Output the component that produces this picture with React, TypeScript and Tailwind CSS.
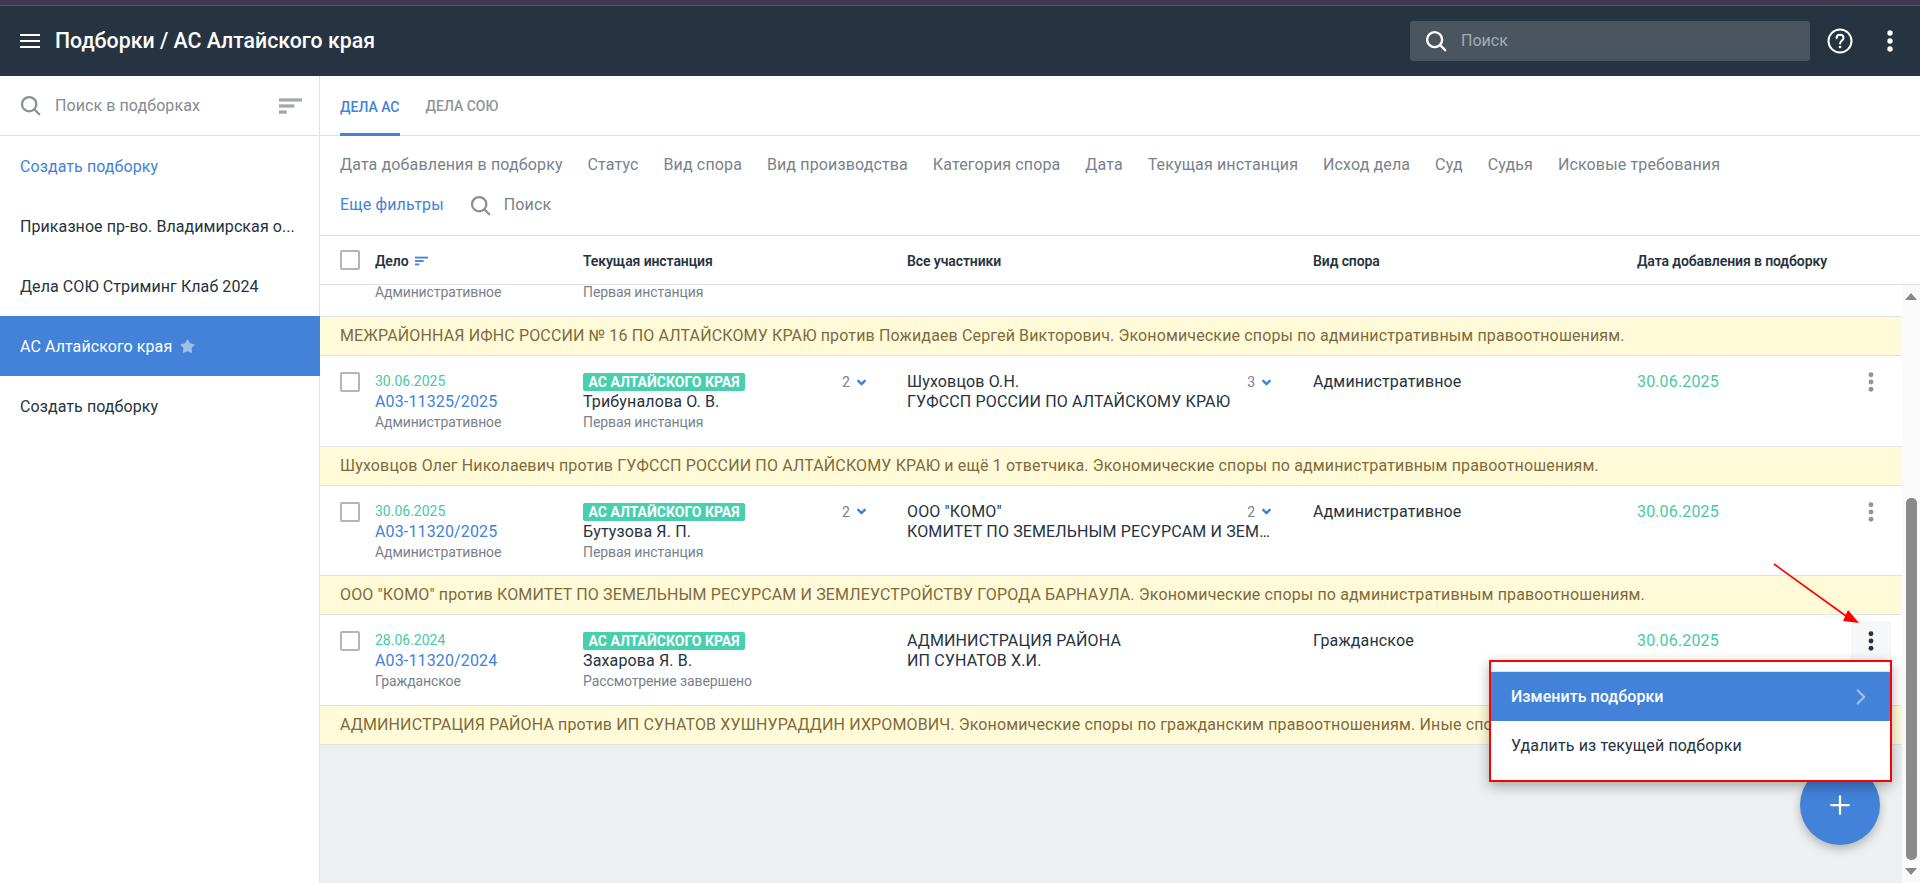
import React from 'react';
import { ChevronDown, ChevronRight, Plus, Star } from 'lucide-react';

const SearchIcon = ({ className }: { className: string }) => (
  <svg viewBox="0 0 24 24" fill="none" stroke="currentColor" strokeWidth="2.6" strokeLinecap="round" className={className}>
    <circle cx="10.5" cy="10.5" r="8.2" />
    <path d="M16.6 16.6 L22 22" />
  </svg>
);

const SortIcon = ({ className }: { className: string }) => (
  <svg viewBox="0 0 24 16" fill="currentColor" className={className}>
    <rect x="0" y="0" width="24" height="3.4" />
    <rect x="0" y="6.3" width="16" height="3.4" />
    <rect x="0" y="12.6" width="8" height="3.4" />
  </svg>
);

const Dots = ({ className }: { className: string }) => (
  <svg viewBox="0 0 6 22" fill="currentColor" className={className}>
    <circle cx="3" cy="3" r="2.7" />
    <circle cx="3" cy="11" r="2.7" />
    <circle cx="3" cy="19" r="2.7" />
  </svg>
);

const Check = () => (
  <div className="w-5 h-5 shrink-0 rounded-[2px] border-[2px] border-[#b3b6b9] bg-white" />
);

const FILTERS = [
  'Дата добавления в подборку', 'Статус', 'Вид спора', 'Вид производства', 'Категория спора', 'Дата',
  'Текущая инстанция', 'Исход дела', 'Суд', 'Судья', 'Исковые требования',
];

const ROWS = [
  {
    date: '30.06.2025', num: 'А03-11325/2025', kind: 'Административное', judge: 'Трибуналова О. В.', stage: 'Первая инстанция', judges: '2',
    a: 'Шуховцов О.Н.', b: 'ГУФССП РОССИИ ПО АЛТАЙСКОМУ КРАЮ', count: '3', added: '30.06.2025',
    note: 'Шуховцов Олег Николаевич против ГУФССП РОССИИ ПО АЛТАЙСКОМУ КРАЮ и ещё 1 ответчика. Экономические споры по административным правоотношениям.',
  },
  {
    date: '30.06.2025', num: 'А03-11320/2025', kind: 'Административное', judge: 'Бутузова Я. П.', stage: 'Первая инстанция', judges: '2',
    a: 'ООО "КОМО"', b: 'КОМИТЕТ ПО ЗЕМЕЛЬНЫМ РЕСУРСАМ И ЗЕМЛЕУСТРОЙСТВУ', count: '2', added: '30.06.2025',
    note: 'ООО "КОМО" против КОМИТЕТ ПО ЗЕМЕЛЬНЫМ РЕСУРСАМ И ЗЕМЛЕУСТРОЙСТВУ ГОРОДА БАРНАУЛА. Экономические споры по административным правоотношениям.',
  },
  {
    date: '28.06.2024', num: 'А03-11320/2024', kind: 'Гражданское', judge: 'Захарова Я. В.', stage: 'Рассмотрение завершено', judges: '',
    a: 'АДМИНИСТРАЦИЯ РАЙОНА', b: 'ИП СУНАТОВ Х.И.', count: '', added: '30.06.2025', active: true,
    note: 'АДМИНИСТРАЦИЯ РАЙОНА против ИП СУНАТОВ ХУШНУРАДДИН ИХРОМОВИЧ. Экономические споры по гражданским правоотношениям. Иные споры по гражданским правоотношениям.',
  },
];

const Note = ({ text }: { text: string }) => (
  <div className="h-10 flex items-center pl-5 pr-4 bg-[#fffbd9] border-y border-[#e0e2e3] text-[16px] tracking-[0.14px] text-[#806a3c] whitespace-nowrap overflow-hidden">
    {text}
  </div>
);

const Count = ({ n }: { n: string }) => (
  <div className="self-start flex items-center gap-[5px] shrink-0 text-[14px] tracking-normal text-[#78828c] leading-5">
    {n}
    <ChevronDown size={13} strokeWidth={4.5} className="text-[#4282d9]" />
  </div>
);

export default function App() {
  return (
    <div className="relative h-[883px] w-[1920px] overflow-hidden bg-white text-[#263340] font-['Roboto',sans-serif] flex flex-col">
      <div className="h-[6px] shrink-0 bg-[#423750] border-b border-[#5a5560]" />

      {/* шапка */}
      <header className="h-[70px] shrink-0 bg-[#263340] flex items-center text-white">
        <div className="ml-5 w-5 flex flex-col gap-[3.5px]">
          <span className="h-[2.5px] bg-white" />
          <span className="h-[2.5px] bg-white" />
          <span className="h-[2.5px] bg-white" />
        </div>
        <div className="ml-[15px] text-[21.3px] font-medium">Подборки / АС Алтайского края</div>
        <div className="ml-auto w-[400px] h-10 rounded-[3px] bg-[#4a5560] flex items-center pl-[15px]">
          <SearchIcon className="w-[22px] h-[22px] text-white" />
          <span className="ml-[14px] text-[16px] text-[#a5abb1]">Поиск</span>
        </div>
        <svg viewBox="0 0 26 26" className="ml-[17px] w-[26px] h-[26px]" fill="none" stroke="white" strokeWidth="2">
          <circle cx="13" cy="13" r="11.5" />
          <path d="M9.6 10.2 C9.6 8 11.2 6.8 13 6.8 C15 6.8 16.5 8.1 16.5 9.9 C16.5 12.4 13.1 12.6 13.1 15.6" strokeLinecap="round" />
          <circle cx="13" cy="19" r="1.3" fill="white" stroke="none" />
        </svg>
        <Dots className="ml-[34px] mr-[27px] w-[6px] h-[24px] text-white" />
      </header>

      <div className="flex-1 flex min-h-0">
        {/* левая колонка */}
        <aside className="w-[320px] shrink-0 border-r border-[#e0e2e3] bg-white text-[16px] tracking-[0.08px]">
          <div className="h-[60px] border-b border-[#e0e2e3] flex items-center pl-5 pr-[17px]">
            <SearchIcon className="w-[21px] h-[21px] text-[#8a9095]" />
            <span className="ml-[14px] text-[#858b91]">Поиск в подборках</span>
            <SortIcon className="ml-auto w-[23px] h-[18px] text-[#a3a7ab]" />
          </div>
          <div className="h-[60px] pt-px flex items-center pl-5 text-[#4282d9]">Создать подборку</div>
          <div className="h-[60px] pt-px flex items-center pl-5 text-[#263340]">Приказное пр-во. Владимирская о...</div>
          <div className="h-[60px] pt-px flex items-center pl-5 text-[#263340]">Дела СОЮ Стриминг Клаб 2024</div>
          <div className="h-[60px] pt-px -mr-px flex items-center pl-5 text-white bg-[#4282d9]">
            АС Алтайского края
            <Star size={15} className="ml-[8px] text-[#a0c0ec] fill-[#a0c0ec]" />
          </div>
          <div className="h-[60px] pt-px flex items-center pl-5 text-[#263340]">Создать подборку</div>
        </aside>

        {/* основная часть */}
        <main className="flex-1 min-w-0 flex flex-col bg-[#ecf0f1]">
          <div className="bg-white">
            <div className="h-[60px] border-b border-[#e0e2e3] flex pl-5 gap-[26px] text-[14px] font-medium uppercase">
              <div className="flex items-center border-b-[3px] border-[#4282d9] -mb-px pt-[5px] text-[#4282d9]">Дела АС</div>
              <div className="flex items-center pt-[2px] text-[#8f959a]">Дела СОЮ</div>
            </div>
            <div className="h-[100px] border-b border-[#e0e2e3] pl-5 pt-[19px] text-[16px] tracking-[0.14px] text-[#78828c]">
              <div className="flex gap-[24.9px] h-5 items-center">
                {FILTERS.map(f => <span key={f}>{f}</span>)}
              </div>
              <div className="flex items-center h-5 mt-5">
                <span className="text-[#4282d9]">Еще фильтры</span>
                <SearchIcon className="ml-[26px] w-[21px] h-[21px] text-[#8a9095]" />
                <span className="ml-[13px]">Поиск</span>
              </div>
            </div>
            <div className="h-[49px] border-b border-[#e0e2e3] flex items-center pl-5 text-[14px] font-semibold tracking-[-0.1px] text-[#263340]">
              <Check />
              <div className="ml-[15px] w-[208px] flex items-center pt-[2px]">
                Дело
                <SortIcon className="ml-[6px] w-[13px] h-[10px] text-[#4282d9]" />
              </div>
              <div className="w-[324px] pt-[2px]">Текущая инстанция</div>
              <div className="w-[406px] pt-[2px]">Все участники</div>
              <div className="w-[324px] pt-[2px]">Вид спора</div>
              <div className="pt-[2px]">Дата добавления в подборку</div>
            </div>
          </div>

          <div className="flex-1 min-h-0 flex">
            <div className="flex-1 min-w-0">
              {/* строка, ушедшая под прокрутку */}
              <div className="h-[31px] bg-white flex pl-[55px] text-[14px] tracking-[-0.1px] leading-[14px] text-[#78828c]">
                <div className="w-[208px]">Административное</div>
                <div>Первая инстанция</div>
              </div>
              <Note text="МЕЖРАЙОННАЯ ИФНС РОССИИ № 16 ПО АЛТАЙСКОМУ КРАЮ против Пожидаев Сергей Викторович. Экономические споры по административным правоотношениям." />
              {ROWS.map(r => (
                <React.Fragment key={r.num}>
                  <div className="h-[89.5px] bg-white flex pl-5 pt-4 tracking-[0.14px]">
                    <Check />
                    <div className="ml-[15px] w-[208px] flex flex-col">
                      <span className="text-[14px] tracking-normal leading-[19px] text-[#48c9a5]">{r.date}</span>
                      <span className="text-[16px] leading-[21px] text-[#4282d9]">{r.num}</span>
                      <span className="text-[14px] tracking-[-0.1px] leading-[20px] text-[#78828c]">{r.kind}</span>
                    </div>
                    <div className="w-[324px] flex">
                      <div className="w-[259px] flex flex-col items-start">
                        <span className="mt-px h-[18px] px-[5.5px] rounded-[2px] bg-[#48cfad] text-white text-[14px] tracking-normal font-bold leading-[18px]">АС АЛТАЙСКОГО КРАЯ</span>
                        <span className="text-[16px] leading-[21px] text-[#263340]">{r.judge}</span>
                        <span className="text-[14px] tracking-[-0.1px] leading-[20px] text-[#78828c]">{r.stage}</span>
                      </div>
                      {r.judges && <Count n={r.judges} />}
                    </div>
                    <div className="w-[406px] text-[16px] leading-5 text-[#263340]">
                      <div className="w-[366px] flex justify-between">
                        <span className="truncate">{r.a}</span>
                        {r.count && <Count n={r.count} />}
                      </div>
                      <div className="w-[364px] truncate">{r.b}</div>
                    </div>
                    <div className="w-[324px] text-[16px] leading-5 text-[#263340]">{r.kind}</div>
                    <div className="w-[214px] text-[16px] leading-5 text-[#48c9a5]">{r.added}</div>
                    <div className={r.active ? 'w-10 h-10 -mt-[10px] rounded-[3px] bg-[#f6f7f8] flex items-center justify-center text-[#263340]' : 'w-10 h-10 -mt-[10px] flex items-center justify-center text-[#8f959a]'}>
                      <Dots className="w-[6px] h-5" />
                    </div>
                  </div>
                  <Note text={r.note} />
                </React.Fragment>
              ))}
            </div>
            {/* полоса прокрутки */}
            <div className="w-[18px] shrink-0 bg-[#fafafa] flex flex-col items-center">
              <div className="mt-[8px] w-0 h-0 border-x-[6px] border-x-transparent border-b-[7px] border-b-[#888]" />
              <div className="mt-[198px] w-[11px] h-[362px] rounded-[5px] bg-[#8a8a8a]" />
              <div className="mt-[8px] w-0 h-0 border-x-[6px] border-x-transparent border-t-[7px] border-t-[#888]" />
            </div>
          </div>
        </main>
      </div>

      {/* FAB */}
      <div className="absolute left-[1800px] top-[765px] w-20 h-20 rounded-full bg-[#4282d9] shadow-[0_4px_10px_rgba(0,0,0,0.25)] flex items-center justify-center">
        <Plus size={30} strokeWidth={1.8} className="text-white" />
      </div>

      {/* меню */}
      <div className="absolute left-[1489px] top-[660px] w-[403px] h-[122px] border-2 border-[#ff0000] bg-white shadow-[0_4px_12px_rgba(0,0,0,0.3)] pt-[9px]">
        <div className="h-[50px] bg-[#4282d9] border-t border-[#d8e4f5] flex items-center pl-5 pr-[16px] text-[16px] font-medium tracking-[0.05px] text-white">
          Изменить подборки
          <ChevronRight size={26} strokeWidth={2} className="ml-auto text-[#a0c0ec]" />
        </div>
        <div className="h-[50px] flex items-center pl-5 text-[16px] tracking-[0.14px] text-[#263340]">Удалить из текущей подборки</div>
      </div>

      {/* красная стрелка */}
      <svg viewBox="0 0 90 70" className="absolute left-[1770px] top-[560px] w-[90px] h-[70px]">
        <path d="M4 4 L76 56" stroke="#ff0000" strokeWidth="1.6" fill="none" />
        <path d="M89 63 L78 50 L73 61 Z" fill="#ff0000" />
      </svg>
    </div>
  );
}
